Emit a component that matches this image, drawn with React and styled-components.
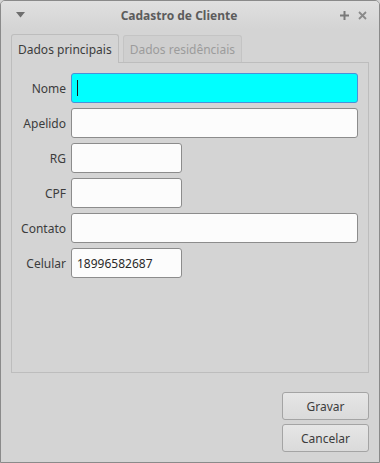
import React from 'react';
import styled, { createGlobalStyle } from 'styled-components';

const GlobalStyle = createGlobalStyle`
  html, body {
    margin: 0;
    padding: 0;
    background: #d4d4d4;
  }
  * {
    box-sizing: border-box;
  }
`;

const Window = styled.div`
  width: 380px;
  height: 463px;
  display: flex;
  flex-direction: column;
  background: #d4d4d4;
  border: 1px solid #8a8a8a;
  border-radius: 5px 5px 0 0;
  font-family: 'Noto Sans', 'Open Sans', sans-serif;
  font-size: 12px;
  color: #3c3c3c;
  overflow: hidden;
`;

const TitleBar = styled.div`
  height: 28px;
  flex: none;
  display: flex;
  align-items: center;
  padding: 0 8px 0 10px;
  background: linear-gradient(#e0e0e0, #d4d4d4);
`;

const Title = styled.div`
  flex: 1;
  text-align: center;
  font-weight: bold;
  color: #5c5c5c;
  font-size: 12px;
  padding-right: 6px;
`;

const TitleButton = styled.span`
  width: 18px;
  display: flex;
  justify-content: center;
  align-items: center;
  color: #7a7a7a;
`;

const Body = styled.div`
  flex: 1;
  display: flex;
  flex-direction: column;
  padding: 5px 10px 10px 10px;
`;

const TabBar = styled.div`
  display: flex;
  align-items: flex-end;
  gap: 4px;
  height: 28px;
`;

const Tab = styled.div`
  height: ${p => (p.$active ? '29px' : '27px')};
  padding: 0 6px;
  display: flex;
  align-items: center;
  border: 1px solid ${p => (p.$active ? '#bdbdbd' : '#c4c4c4')};
  border-bottom: none;
  border-radius: 3px 3px 0 0;
  background: ${p => (p.$active ? '#d4d4d4' : '#cfcfcf')};
  color: ${p => (p.$active ? '#3c3c3c' : '#9c9c9c')};
  margin-bottom: ${p => (p.$active ? '-1px' : '0')};
  position: relative;
  z-index: ${p => (p.$active ? 1 : 0)};
`;

const Panel = styled.div`
  height: 311px;
  border: 1px solid #bdbdbd;
  padding: 10px 10px 0 0;
`;

const Form = styled.div`
  display: grid;
  grid-template-columns: 54px 1fr;
  column-gap: 5px;
  row-gap: 5px;
`;

const Label = styled.div`
  height: 30px;
  display: flex;
  align-items: center;
  justify-content: flex-end;
  color: #3c3c3c;
`;

const Field = styled.div`
  height: 30px;
  width: ${p => (p.$short ? '111px' : '100%')};
  display: flex;
  align-items: center;
  padding: 0 5px;
  border: 1px solid ${p => (p.$focused ? '#4a90d9' : '#8c8c8c')};
  border-radius: 3px;
  background: ${p => (p.$focused ? '#00ffff' : '#fcfcfc')};
  color: #2a2a2a;
`;

const Caret = styled.span`
  width: 1px;
  height: 16px;
  background: #1a1a1a;
`;

const Actions = styled.div`
  margin-top: auto;
  display: flex;
  flex-direction: column;
  align-items: flex-end;
  gap: 4px;
`;

const Button = styled.div`
  width: 87px;
  height: 28px;
  display: flex;
  align-items: center;
  justify-content: center;
  border: 1px solid #a4a4a4;
  border-radius: 3px;
  background: linear-gradient(#e6e6e6, #dadada);
  color: #3c3c3c;
`;

const fields = [
  { label: 'Nome', focused: true },
  { label: 'Apelido' },
  { label: 'RG', short: true },
  { label: 'CPF', short: true },
  { label: 'Contato' },
  { label: 'Celular', short: true, value: '18996582687' },
];

export default function App() {
  return (
    <>
      <GlobalStyle />
      <Window>
        <TitleBar>
          <TitleButton>
            <svg width="9" height="6" viewBox="0 0 9 6">
              <path d="M0 0h9L4.5 5.5z" fill="#6e6e6e" />
            </svg>
          </TitleButton>
          <Title>Cadastro de Cliente</Title>
          <TitleButton>
            <svg width="9" height="9" viewBox="0 0 9 9">
              <path d="M4.5 0v9M0 4.5h9" stroke="#7a7a7a" strokeWidth="2" />
            </svg>
          </TitleButton>
          <TitleButton>
            <svg width="9" height="9" viewBox="0 0 9 9">
              <path d="M1 1l7 7M8 1l-7 7" stroke="#8a8a8a" strokeWidth="1.8" />
            </svg>
          </TitleButton>
        </TitleBar>
        <Body>
          <TabBar>
            <Tab $active>Dados principais</Tab>
            <Tab>Dados residênciais</Tab>
          </TabBar>
          <Panel>
            <Form>
              {fields.map(f => (
                <React.Fragment key={f.label}>
                  <Label>{f.label}</Label>
                  <Field $short={f.short} $focused={f.focused}>
                    {f.focused && <Caret />}
                    {f.value}
                  </Field>
                </React.Fragment>
              ))}
            </Form>
          </Panel>
          <Actions>
            <Button>Gravar</Button>
            <Button>Cancelar</Button>
          </Actions>
        </Body>
      </Window>
    </>
  );
}
